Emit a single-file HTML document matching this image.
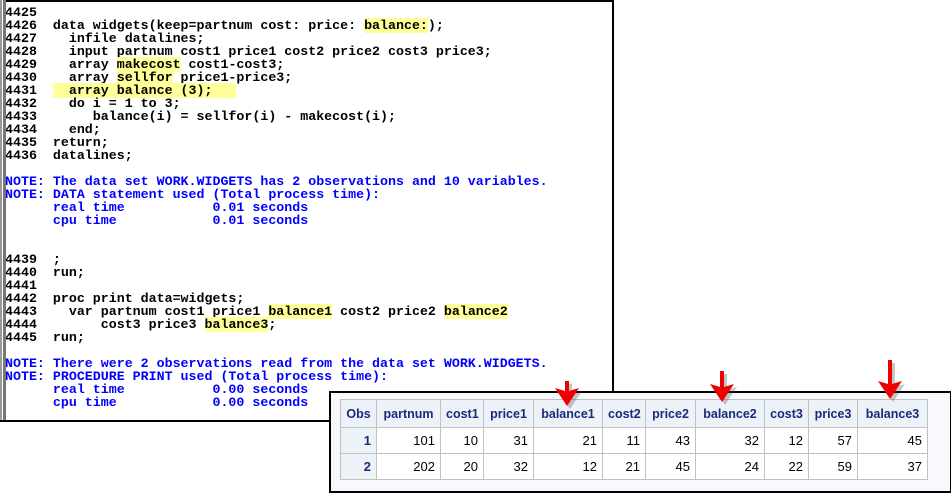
<!DOCTYPE html>
<html><head><meta charset="utf-8"><style>
body{margin:0;width:951px;height:493px;background:#fff;position:relative;overflow:hidden;font-family:"Liberation Mono",monospace}
#log{position:absolute;left:0;top:0;width:612px;height:418px;border:2px solid #000;border-left:none;background:#fff}
#lb{position:absolute;left:0;top:0;width:2px;height:420px;background:#999;border-right:1px solid #fff;box-shadow:3px 0 0 #777}
.l{position:absolute;left:5px;height:13px;line-height:13px;font-size:13.3px;font-weight:bold;white-space:pre;color:#000;-webkit-text-stroke:0}
.b{color:#0000ff}
.h{background:#ffff99}
#panel{position:absolute;left:329px;top:391px;width:619px;height:98px;border:2px solid #000;background:#f7f9fc}
table{position:absolute;left:9px;top:6px;border-collapse:collapse;table-layout:fixed;width:587px;font-family:"Liberation Sans",sans-serif;font-size:13px;background:#fff}
td,th{border:1px solid #c1c1c1;padding:0 5px;height:25px;color:#000;overflow:hidden;white-space:nowrap}
th{background:#edf2f9;color:#1a2a7a;font-weight:bold;height:27px;font-size:12.5px}
td{text-align:right}
td.o{background:#edf2f9;color:#1a2a7a;font-weight:bold}
svg{position:absolute;left:0;top:0}
</style></head><body>
<div id="log">
<div class="l" style="top:4px">4425</div>
<div class="l" style="top:17px">4426  data widgets(keep=partnum cost: price: <span class="h">balance:</span>);</div>
<div class="l" style="top:30px">4427    infile datalines;</div>
<div class="l" style="top:43px">4428    input partnum cost1 price1 cost2 price2 cost3 price3;</div>
<div class="l" style="top:56px">4429    array <span class="h">makecost</span> cost1-cost3;</div>
<div class="l" style="top:69px">4430    array <span class="h">sellfor</span> price1-price3;</div>
<div class="l" style="top:82px">4431  <span class="h">  array balance (3);   </span></div>
<div class="l" style="top:95px">4432    do i = 1 to 3;</div>
<div class="l" style="top:108px">4433       balance(i) = sellfor(i) - makecost(i);</div>
<div class="l" style="top:121px">4434    end;</div>
<div class="l" style="top:134px">4435  return;</div>
<div class="l" style="top:147px">4436  datalines;</div>
<div class="l b" style="top:173px">NOTE: The data set WORK.WIDGETS has 2 observations and 10 variables.</div>
<div class="l b" style="top:186px">NOTE: DATA statement used (Total process time):</div>
<div class="l b" style="top:199px">      real time           0.01 seconds</div>
<div class="l b" style="top:212px">      cpu time            0.01 seconds</div>
<div class="l" style="top:251px">4439  ;</div>
<div class="l" style="top:264px">4440  run;</div>
<div class="l" style="top:277px">4441</div>
<div class="l" style="top:290px">4442  proc print data=widgets;</div>
<div class="l" style="top:303px">4443    var partnum cost1 price1 <span class="h">balance1</span> cost2 price2 <span class="h">balance2</span></div>
<div class="l" style="top:316px">4444        cost3 price3 <span class="h">balance3</span>;</div>
<div class="l" style="top:329px">4445  run;</div>
<div class="l b" style="top:355px">NOTE: There were 2 observations read from the data set WORK.WIDGETS.</div>
<div class="l b" style="top:368px">NOTE: PROCEDURE PRINT used (Total process time):</div>
<div class="l b" style="top:381px">      real time           0.00 seconds</div>
<div class="l b" style="top:394px">      cpu time            0.00 seconds</div>
</div>
<div id="lb"></div>
<div id="panel">
<table>
<colgroup><col style="width:36px"><col style="width:64px"><col style="width:43px"><col style="width:50px"><col style="width:69px"><col style="width:43px"><col style="width:50px"><col style="width:69px"><col style="width:44px"><col style="width:49px"><col style="width:70px"></colgroup>
<tr><th>Obs</th><th>partnum</th><th>cost1</th><th>price1</th><th>balance1</th><th>cost2</th><th>price2</th><th>balance2</th><th>cost3</th><th>price3</th><th>balance3</th></tr>
<tr><td class="o">1</td><td>101</td><td>10</td><td>31</td><td>21</td><td>11</td><td>43</td><td>32</td><td>12</td><td>57</td><td>45</td></tr>
<tr><td class="o">2</td><td>202</td><td>20</td><td>32</td><td>12</td><td>21</td><td>45</td><td>24</td><td>22</td><td>59</td><td>37</td></tr>
</table>
</div>
<svg width="951" height="493">
<g fill="#444" opacity="0.3" transform="translate(3,3)">
<path d="M565 381h4v10l10-3-12 18-12-18 10 3z"/>
<path d="M720 371h4v16l10-3-12 18-12-18 10 3z"/>
<path d="M888 360h4v24l10-3-12 18-12-18 10 3z"/>
</g>
<g fill="#ee0000">
<path d="M565 381h4v10l10-3-12 18-12-18 10 3z"/>
<path d="M720 371h4v16l10-3-12 18-12-18 10 3z"/>
<path d="M888 360h4v24l10-3-12 18-12-18 10 3z"/>
</g>
</svg>
</body></html>
